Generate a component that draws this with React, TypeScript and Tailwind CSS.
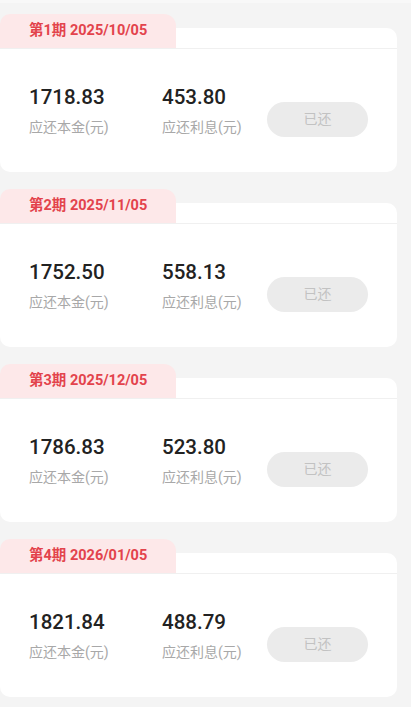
const rows = [
  { period: 1, date: "2025/10/05", principal: "1718.83", interest: "453.80" },
  { period: 2, date: "2025/11/05", principal: "1752.50", interest: "558.13" },
  { period: 3, date: "2025/12/05", principal: "1786.83", interest: "523.80" },
  { period: 4, date: "2026/01/05", principal: "1821.84", interest: "488.79" },
];

function PlanCard({ row }: { row: (typeof rows)[number] }) {
  return (
    <div className="relative pt-[14px]">
      {/* 期数标签 */}
      <div className="absolute left-0 top-0 z-10 flex h-[34px] w-[176px] items-center rounded-tl-[10px] rounded-tr-[12px] bg-[#fde8e9] pl-[29px] text-[14.5px] font-bold text-[#e3434c]">
        第{row.period}期 {row.date}
      </div>
      <div className="w-[397px] rounded-[10px] bg-white">
        <div className="h-[20px] border-b border-[#f0f0f0] box-content" />
        <div className="flex h-[123px] items-start px-[29px] pt-[34px]">
          <div className="w-[133px]">
            <div className="text-[20.5px] font-medium leading-[28px] text-[#222]">{row.principal}</div>
            <div className="mt-[6px] text-[14px] leading-[20px] text-[#a8a8a8]">应还本金(元)</div>
          </div>
          <div className="w-[105px]">
            <div className="text-[20.5px] font-medium leading-[28px] text-[#222]">{row.interest}</div>
            <div className="mt-[6px] text-[14px] leading-[20px] text-[#a8a8a8]">应还利息(元)</div>
          </div>
          <button className="mt-[19px] flex h-[35px] w-[101px] items-center justify-center rounded-full bg-[#ebebeb] text-[14px] text-[#c2c2c2]">
            已还
          </button>
        </div>
      </div>
    </div>
  );
}

export default function App() {
  return (
    <div
      className="min-h-[707px] bg-[#f4f4f4]"
      style={{ fontFamily: 'Roboto, "Noto Sans CJK SC", sans-serif' }}
    >
      <div className="h-[3px] bg-[#f8f8f8]" />
      <div className="flex flex-col gap-[17px] pt-[11px] pb-[10px]">
        {rows.map((row) => (
          <PlanCard key={row.period} row={row} />
        ))}
      </div>
    </div>
  );
}
